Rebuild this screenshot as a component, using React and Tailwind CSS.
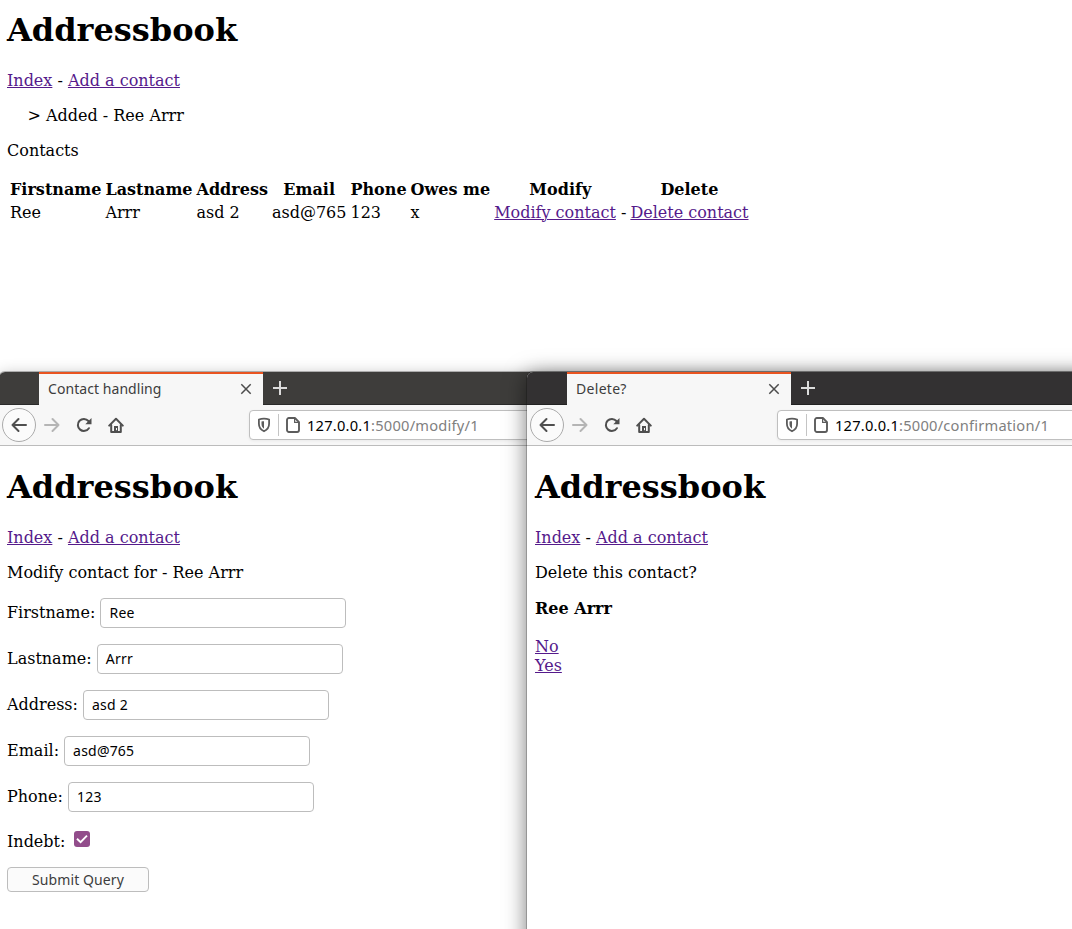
import React from "react";

function PageHeader() {
  return (
    <>
      <h1 className="h-[38px] text-[32px] leading-[38px] font-bold">Addressbook</h1>
      <p className="mt-[22px]">
        <Link>Index</Link> - <Link>Add a contact</Link>
      </p>
    </>
  );
}

function Link({ children }) {
  return (
    <a href="#" className="text-[#551a8b] underline decoration-1 underline-offset-[1px]">
      {children}
    </a>
  );
}

function BackIcon({ className }) {
  return (
    <svg className={className} width="16" height="16" viewBox="0 0 16 16" fill="none" stroke="currentColor" strokeWidth="2" strokeLinecap="round" strokeLinejoin="round">
      <path d="M15 8H1.5M7.5 2L1.5 8l6 6" />
    </svg>
  );
}

function ReloadIcon() {
  return (
    <svg width="16" height="16" viewBox="0 0 16 16" fill="none" stroke="currentColor" strokeWidth="2" strokeLinecap="round">
      <path d="M12.9 11.2A6 6 0 1 1 12.4 4" />
      <path d="M15.5 1v6.2H9.3z" fill="currentColor" stroke="none" />
    </svg>
  );
}

function HomeIcon() {
  return (
    <svg width="16" height="16" viewBox="0 0 16 16" fill="none" stroke="currentColor" strokeWidth="2" strokeLinecap="round" strokeLinejoin="round">
      <path d="M1.2 8.6L8 1.8l6.8 6.8" />
      <path d="M3.2 8v7h9.6V8" />
      <path d="M6 15V9h4v6z" fill="currentColor" stroke="none" />
      <path d="M8.500 11.400v1.400" stroke="#f7f7f7" strokeWidth="1" />
    </svg>
  );
}

function ShieldIcon() {
  return (
    <svg width="14" height="16" viewBox="0 0 14 16" fill="none" stroke="currentColor" strokeWidth="1.8" strokeLinejoin="round">
      <path d="M7 1.6c-1.8 0-3.600.3-5.100.9v4.300c0 3.300 1.700 6 5.100 7.500 3.400-1.500 5.100-4.200 5.100-7.500V2.500C10.600 1.900 8.800 1.600 7 1.600z" />
      <path d="M7 4.300c-.9 0-1.700.1-2.500.3v2.500c0 2 .9 3.500 2.500 4.600z" fill="currentColor" stroke="none" />
    </svg>
  );
}

function DocumentIcon() {
  return (
    <svg width="14" height="16" viewBox="0 0 14 16" fill="none" stroke="currentColor" strokeWidth="1.9" strokeLinejoin="round">
      <path d="M2.900 1h6L13 5.100v8a1.900 1.900 0 0 1-1.900 1.900H2.900A1.900 1.900 0 0 1 1 13.100V2.900A1.900 1.900 0 0 1 2.900 1z" />
      <path d="M8.600 1.200v4.200h4.200" strokeWidth="1.200" />
    </svg>
  );
}

function BrowserWindow({ className, stripClass, title, titleClass, path, children }) {
  return (
    <section className={`absolute top-[372px] h-[600px] rounded-tl-[6px] bg-white ${className}`}>
      <div className={`flex h-[33px] rounded-tl-[6px] border-b pl-[40px] ${stripClass}`}>
        <div className="-mb-px flex w-[224px] items-center justify-between border-t-2 border-[#e95420] bg-[#f7f7f7] pr-[11px] pb-[2px] pl-[9px] text-[#3d3d3d]">
          <span className={`font-['Noto_Sans',sans-serif] text-[14px] leading-[20px] whitespace-nowrap ${titleClass}`}>{title}</span>
          <svg width="12" height="12" viewBox="0 0 12 12" fill="none" stroke="#4c4c4c" strokeWidth="1.500">
            <path d="M1.300 1.300l9.400 9.400M10.700 1.300l-9.400 9.400" />
          </svg>
        </div>
        <svg className="mt-[9px] ml-[10px]" width="14" height="14" viewBox="0 0 14 14" fill="none" stroke="#dcdcdc" strokeWidth="2">
          <path d="M7 0v14M0 7h14" />
        </svg>
      </div>
      <div className="flex h-[41px] items-center border-b border-[#bcbcbc] bg-[#f7f7f7] pl-[3px] text-[#4f4f4f]">
        <div className="flex size-[34px] items-center justify-center rounded-full border border-[#ababab] bg-[#fbfbfb]">
          <BackIcon />
        </div>
        <BackIcon className="ml-[8px] rotate-180 text-[#b5b5b5]" />
        <span className="ml-[16px]"><ReloadIcon /></span>
        <span className="ml-[16px]"><HomeIcon /></span>
        <div className="ml-[125px] flex h-[30px] flex-1 items-center rounded-[4px] border border-[#bfbfbf] bg-white pl-[7px] text-[#5c5c5c] shadow-[0_1px_3px_rgba(0,0,0,0.06)]">
          <ShieldIcon />
          <span className="ml-[7px] h-[22px] w-px bg-[#c4c4c4]" />
          <span className="ml-[7px]"><DocumentIcon /></span>
          <span className="ml-[7px] font-['Noto_Sans',sans-serif] text-[14.67px] leading-[20px] tracking-[0.22px] whitespace-nowrap text-[#808080]">
            <span className="text-black">127.0.0.1</span>{path}
          </span>
        </div>
      </div>
      <div className="px-[8px] pt-[22px]">{children}</div>
    </section>
  );
}

function Field({ label, value }) {
  return (
    <div className="flex h-[30px] items-center">
      <label className="-mt-[2px] whitespace-pre">{label} </label>
      <div className="flex h-[30px] w-[246px] items-center rounded-[4px] border border-[#bdbdbd] bg-white pb-[2px] pl-[8px] font-['Noto_Sans',sans-serif] text-[14px] tracking-[0.2px]">
        {value}
      </div>
    </div>
  );
}

const columns = ["Firstname", "Lastname", "Address", "Email", "Phone", "Owes me", "Modify", "Delete"];

export default function App() {
  return (
    <main className="relative h-[929px] w-[1072px] overflow-hidden bg-white font-['DejaVu_Serif',serif] text-[16px] leading-[19px] text-black">
      <div className="px-[7px] pt-[11px]">
        <PageHeader />
        <p className="mt-[16px] ml-[20.5px]">&gt; Added - Ree Arrr</p>
        <p className="mt-[16px]">Contacts</p>
        <table className="mt-[17px] border-separate border-spacing-[2px]">
          <thead>
            <tr>
              {columns.map((c) => (
                <th key={c} className="p-px text-center font-bold">{c}</th>
              ))}
            </tr>
          </thead>
          <tbody>
            <tr>
              <td className="p-px">Ree</td>
              <td className="p-px">Arrr</td>
              <td className="p-px">asd 2</td>
              <td className="p-px">asd@765</td>
              <td className="p-px">123</td>
              <td className="p-px">x</td>
              <td className="p-px"><Link>Modify contact</Link> -</td>
              <td className="p-px"><Link>Delete contact</Link></td>
            </tr>
          </tbody>
        </table>
      </div>

      <BrowserWindow
        className="-left-px w-[1120px] shadow-[0_0_0_1px_rgba(0,0,0,0.25),0_3px_16px_rgba(0,0,0,0.3)]"
        stripClass="bg-[#3e3d3b] border-[#2a2a2a]"
        title="Contact handling"
        titleClass="tracking-[0.06px]"
        path=":5000/modify/1"
      >
        <PageHeader />
        <p className="mt-[16px]">Modify contact for - Ree Arrr</p>
        <div className="mt-[16px] flex flex-col gap-[16px]">
          <Field label="Firstname:" value="Ree" />
          <Field label="Lastname:" value="Arrr" />
          <Field label="Address:" value="asd 2" />
          <Field label="Email:" value="asd@765" />
          <Field label="Phone:" value="123" />
        </div>
        <div className="mt-[19px] flex h-[20px] items-start">
          <span className="mt-px">Indebt:</span>
          <span className="ml-[9px] flex size-[16px] items-center justify-center rounded-[3px] bg-[#924d8b]">
            <svg width="12" height="10" viewBox="0 0 12 10" fill="none" stroke="white" strokeWidth="1.900">
              <path d="M1 4.700l3.600 3.400L11 1.700" />
            </svg>
          </span>
        </div>
        <button className="mt-[16px] flex h-[25px] w-[142px] items-center justify-center rounded-[4px] border border-[#bdbdbd] bg-[#fbfbfb] font-['Noto_Sans',sans-serif] text-[14px] tracking-[0.1px] text-[#3d3d3d]">
          Submit Query
        </button>
      </BrowserWindow>

      <BrowserWindow
        className="left-[527px] w-[640px] shadow-[0_0_0_1px_rgba(0,0,0,0.2),0_3px_22px_rgba(0,0,0,0.55)]"
        stripClass="bg-[#333132] border-[#222222]"
        title="Delete?"
        titleClass="tracking-[0.3px]"
        path=":5000/confirmation/1"
      >
        <PageHeader />
        <p className="mt-[16px]">Delete this contact?</p>
        <h4 className="mt-[17px] font-bold">Ree Arrr</h4>
        <div className="mt-[19px] flex flex-col items-start">
          <Link>No</Link>
          <Link>Yes</Link>
        </div>
      </BrowserWindow>
    </main>
  );
}
